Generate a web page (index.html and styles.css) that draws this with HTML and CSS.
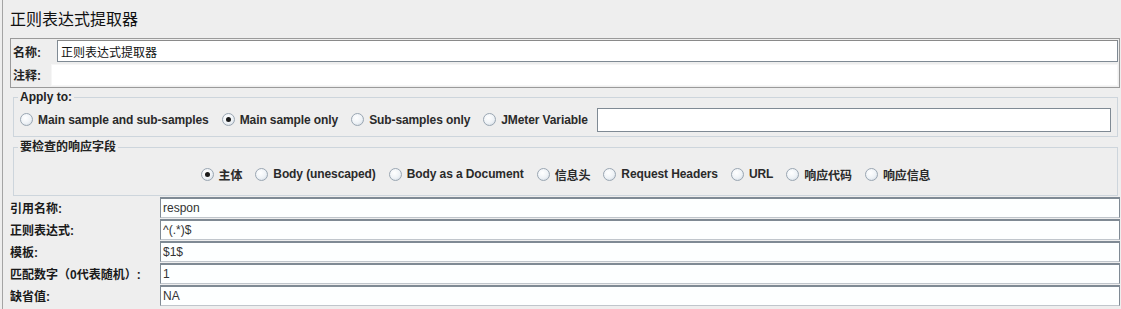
FILE: index.html
```html
<!DOCTYPE html>
<html lang="zh">
<head>
  <meta charset="UTF-8">
  <title>正则表达式提取器</title>
  <link rel="stylesheet" href="styles.css">
</head>
<body>
  <div class="page">
    <h1 class="title">正则表达式提取器</h1>

    <div class="namebox">
      <div class="namerow">
        <label class="name-label">名称:</label>
        <input type="text" class="name-input" value="正则表达式提取器">
      </div>
      <div class="namerow">
        <label class="comment-label">注释:</label>
        <input type="text" class="comment-input">
      </div>
    </div>

    <fieldset class="group apply">
      <legend>Apply to:</legend>
      <div class="radios">
        <span class="radio"><i class="dot"></i>Main sample and sub-samples</span>
        <span class="radio"><i class="dot on"></i>Main sample only</span>
        <span class="radio"><i class="dot"></i>Sub-samples only</span>
        <span class="radio"><i class="dot"></i>JMeter Variable</span>
        <input type="text" class="var-input">
      </div>
    </fieldset>

    <fieldset class="group fields">
      <legend>要检查的响应字段</legend>
      <div class="radios center">
        <span class="radio"><i class="dot on"></i>主体</span>
        <span class="radio"><i class="dot"></i>Body (unescaped)</span>
        <span class="radio"><i class="dot"></i>Body as a Document</span>
        <span class="radio"><i class="dot"></i>信息头</span>
        <span class="radio"><i class="dot"></i>Request Headers</span>
        <span class="radio"><i class="dot"></i>URL</span>
        <span class="radio"><i class="dot"></i>响应代码</span>
        <span class="radio"><i class="dot"></i>响应信息</span>
      </div>
    </fieldset>

    <div class="form">
      <label>引用名称:</label>
      <input type="text" value="respon">
      <label>正则表达式:</label>
      <input type="text" value="^(.*)$">
      <label>模板:</label>
      <input type="text" value="$1$">
      <label>匹配数字（0代表随机）:</label>
      <input type="text" value="1">
      <label>缺省值:</label>
      <input type="text" value="NA">
    </div>
  </div>
</body>
</html>
```

FILE: styles.css
```css
* {
  box-sizing: border-box;
}
body {
  margin: 0;
  background: #eeeeee;
  font-family: "Liberation Sans", "Noto Sans CJK SC", sans-serif;
  font-size: 12px;
  color: #222;
}
.page {
  margin-left: 2px;
  border-left: 1px solid #a4a4a4;
  padding: 0 1px 0 7px;
  height: 309px;
}
.title {
  margin: 0;
  padding-top: 10px;
  height: 38px;
  font-size: 16px;
  font-weight: normal;
  line-height: 20px;
  color: #111;
}
.namebox {
  border: 1px solid #9a9a9a;
  padding: 1px 1px 1px 2px;
}
.namerow {
  display: flex;
  align-items: center;
}
.namerow label {
  font-weight: bold;
}
.name-label {
  width: 44px;
}
.comment-label {
  width: 38px;
}
.namerow input {
  flex: 1;
  height: 22px;
  font: 12px "Liberation Sans", "Noto Sans CJK SC", sans-serif;
  padding: 0 3px;
  color: #111;
  background: #fff;
  outline: none;
}
.name-input {
  border: 1px solid #7f8a94;
  border-top-color: #8a8a8a;
}
.comment-input {
  margin-top: 2px;
  border: 1px solid #f6f6f6;
}
.group {
  margin: 2px 2px 0 3px;
  border: 1px solid #cdd5dc;
  padding: 0 6px;
}
.group legend {
  font-weight: bold;
  padding: 0 2px;
  margin-left: -2px;
  line-height: 14px;
  color: #222;
}
.apply {
  height: 47px;
  margin-top: 2px;
}
.apply .radios {
  height: 31px;
}
.fields {
  height: 56px;
  margin-top: 3px;
}
.fields .radios {
  height: 36px;
  padding-top: 4px;
}
.radios {
  display: flex;
  align-items: center;
  gap: 13px;
}
.radios.center {
  justify-content: center;
}
.radio {
  display: flex;
  align-items: center;
  gap: 5px;
  font-weight: bold;
  color: #2a2a2a;
  white-space: nowrap;
  letter-spacing: -0.1px;
}
.dot {
  width: 13px;
  height: 13px;
  border-radius: 50%;
  border: 1px solid #9aa6b2;
  background: radial-gradient(circle at 40% 35%, #ffffff 0%, #eef2f6 55%, #c8d2dc 100%);
  display: flex;
  align-items: center;
  justify-content: center;
}
.dot.on::after {
  content: "";
  width: 5px;
  height: 5px;
  border-radius: 50%;
  background: #1a1a1a;
}
.var-input {
  flex: 1;
  height: 24px;
  margin-left: -4px;
  border: 1px solid #7f8a94;
  background: #fff;
}
.form {
  display: grid;
  grid-template-columns: 150px 1fr;
  row-gap: 1px;
  margin-top: 1px;
}
.form label {
  font-weight: bold;
  display: flex;
  align-items: center;
  height: 21px;
  color: #1a1a1a;
}
.form input {
  height: 21px;
  border: 1px solid #7f8a94;
  border-top-width: 2px;
  border-bottom-color: #c0c6cc;
  background: #fdffff;
  font: 12px "Liberation Sans", sans-serif;
  padding: 0 2px;
  color: #333;
  outline: none;
}
```
